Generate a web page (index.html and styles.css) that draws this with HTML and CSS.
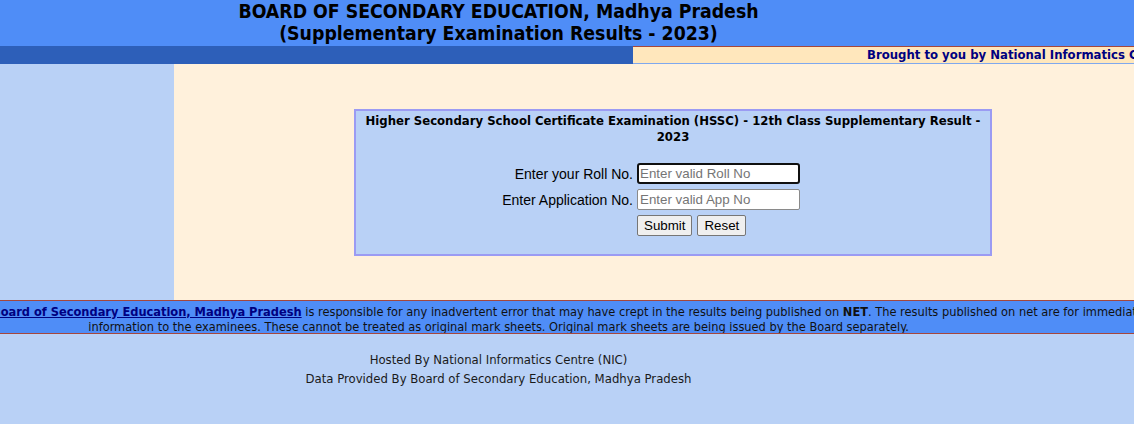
FILE: index.html
```html
<!DOCTYPE html>
<html lang="en">
<head>
<meta charset="utf-8">
<title>MP Board Supplementary Result 2023</title>
<link rel="stylesheet" href="styles.css">
</head>
<body>
<header class="top">
  <h1 class="title">BOARD OF SECONDARY EDUCATION, Madhya Pradesh<br>(Supplementary Examination Results - 2023)</h1>
</header>
<div class="strip">
  <div class="strip-left"></div>
  <div class="strip-right"><span class="brought">Brought to you by National Informatics Centre</span></div>
</div>
<main class="main">
  <aside class="side"></aside>
  <section class="content">
    <form class="box" onsubmit="return false;">
      <h2 class="box-title">Higher Secondary School Certificate Examination (HSSC) - 12th Class Supplementary Result - 2023</h2>
      <div class="fields">
        <label class="lbl" for="roll">Enter your Roll No.</label>
        <input class="inp focused" id="roll" type="text" placeholder="Enter valid Roll No">
        <label class="lbl" for="app">Enter Application No.</label>
        <input class="inp" id="app" type="text" placeholder="Enter valid App No">
        <span></span>
        <div class="btns">
          <button class="btn" type="submit">Submit</button>
          <button class="btn" type="reset">Reset</button>
        </div>
      </div>
    </form>
  </section>
</main>
<div class="disclaimer">
  <p class="line1"><a class="board" href="#">Board of Secondary Education, Madhya Pradesh</a> is responsible for any inadvertent error that may have crept in the results being published on <b>NET</b>. The results published on net are for immediate</p>
  <p class="line2">information to the examinees. These cannot be treated as original mark sheets. Original mark sheets are being issued by the Board separately.</p>
</div>
<footer class="footer">
  <p>Hosted By National Informatics Centre (NIC)</p>
  <p>Data Provided By Board of Secondary Education, Madhya Pradesh</p>
</footer>
</body>
</html>
```

FILE: styles.css
```css
html, body {
  margin: 0;
  padding: 0;
}
body {
  background: #b9d1f6;
  font-family: "DejaVu Sans Condensed", "DejaVu Sans", sans-serif;
  font-stretch: condensed;
  color: #111;
  overflow: hidden;
  width: 1134px;
  height: 424px;
}
.top {
  background: #4f8df7;
  height: 46px;
  box-sizing: border-box;
  padding-right: 137px;
}
.title {
  margin: 0;
  padding-top: 1px;
  text-align: center;
  font-size: 19.3px;
  line-height: 22px;
  font-weight: bold;
  color: #000;
}
.strip {
  display: flex;
  height: 18px;
}
.strip-left {
  width: 633px;
  background: #2d5fb9;
}
.strip-right {
  flex: 1;
  background: #ffe7bc;
  border-top: 1px solid #a5473c;
  border-bottom: 1px solid #7fa8ee;
  box-sizing: border-box;
  padding-left: 234px;
  white-space: nowrap;
  overflow: hidden;
  line-height: 13px;
}
.brought {
  font-size: 13px;
  font-weight: bold;
  color: #000080;
}
.main {
  display: flex;
  height: 236px;
}
.side {
  width: 174px;
  background: #b9d1f6;
}
.content {
  flex: 1;
  background: #fff1dc;
  padding: 45px 0 0 180px;
}
.box {
  width: 638px;
  height: 147px;
  box-sizing: border-box;
  border: 2px solid #9b9bf3;
  background: #b9d1f6;
  padding: 2px 8px 0;
  margin: 0;
}
.box-title {
  margin: 0;
  font-size: 13px;
  line-height: 16px;
  font-weight: bold;
  text-align: center;
  color: #000;
}
.fields {
  display: grid;
  grid-template-columns: 265px 163px;
  column-gap: 4px;
  row-gap: 5px;
  margin-top: 18px;
  margin-left: 4px;
  align-items: center;
}
.lbl {
  text-align: right;
  font-family: "Liberation Sans", Arial, sans-serif;
  font-size: 14px;
  color: #000;
}
.inp {
  width: 163px;
  height: 21px;
  box-sizing: border-box;
  margin: 0;
  padding: 1px 2px;
  border: 1px solid #8a8a8a;
  border-radius: 2px;
  background: #fff;
  font-family: "Liberation Sans", Arial, sans-serif;
  font-size: 13.33px;
  color: #000;
}
.inp::placeholder {
  color: #757575;
}
.inp.focused {
  outline: none;
  border: 2px solid #101010;
  border-radius: 3px;
  padding: 0 1px;
}
.btns {
  display: flex;
  gap: 5px;
}
.btn {
  height: 21px;
  margin: 0;
  padding: 1px 6px;
  box-sizing: border-box;
  border: 1px solid #767676;
  border-radius: 2px;
  background: #efefef;
  font-family: "Liberation Sans", Arial, sans-serif;
  font-size: 13.33px;
  color: #000;
}
.disclaimer {
  background: #4f8df7;
  border-top: 1px solid #a5473c;
  border-bottom: 1px solid #a5473c;
  height: 34px;
  box-sizing: border-box;
  padding-top: 3px;
  font-size: 12.7px;
  line-height: 15px;
  overflow: hidden;
}
.disclaimer p {
  margin: 0;
  white-space: nowrap;
}
.line1 {
  margin-left: -8px !important;
}
.line2 {
  text-align: center;
  padding-right: 137px;
}
.board {
  color: #000080;
  font-weight: bold;
}
.footer {
  padding: 16px 137px 0 0;
  text-align: center;
  font-size: 13px;
  line-height: 19px;
  color: #1a1a1a;
}
.footer p {
  margin: 0;
}
```
